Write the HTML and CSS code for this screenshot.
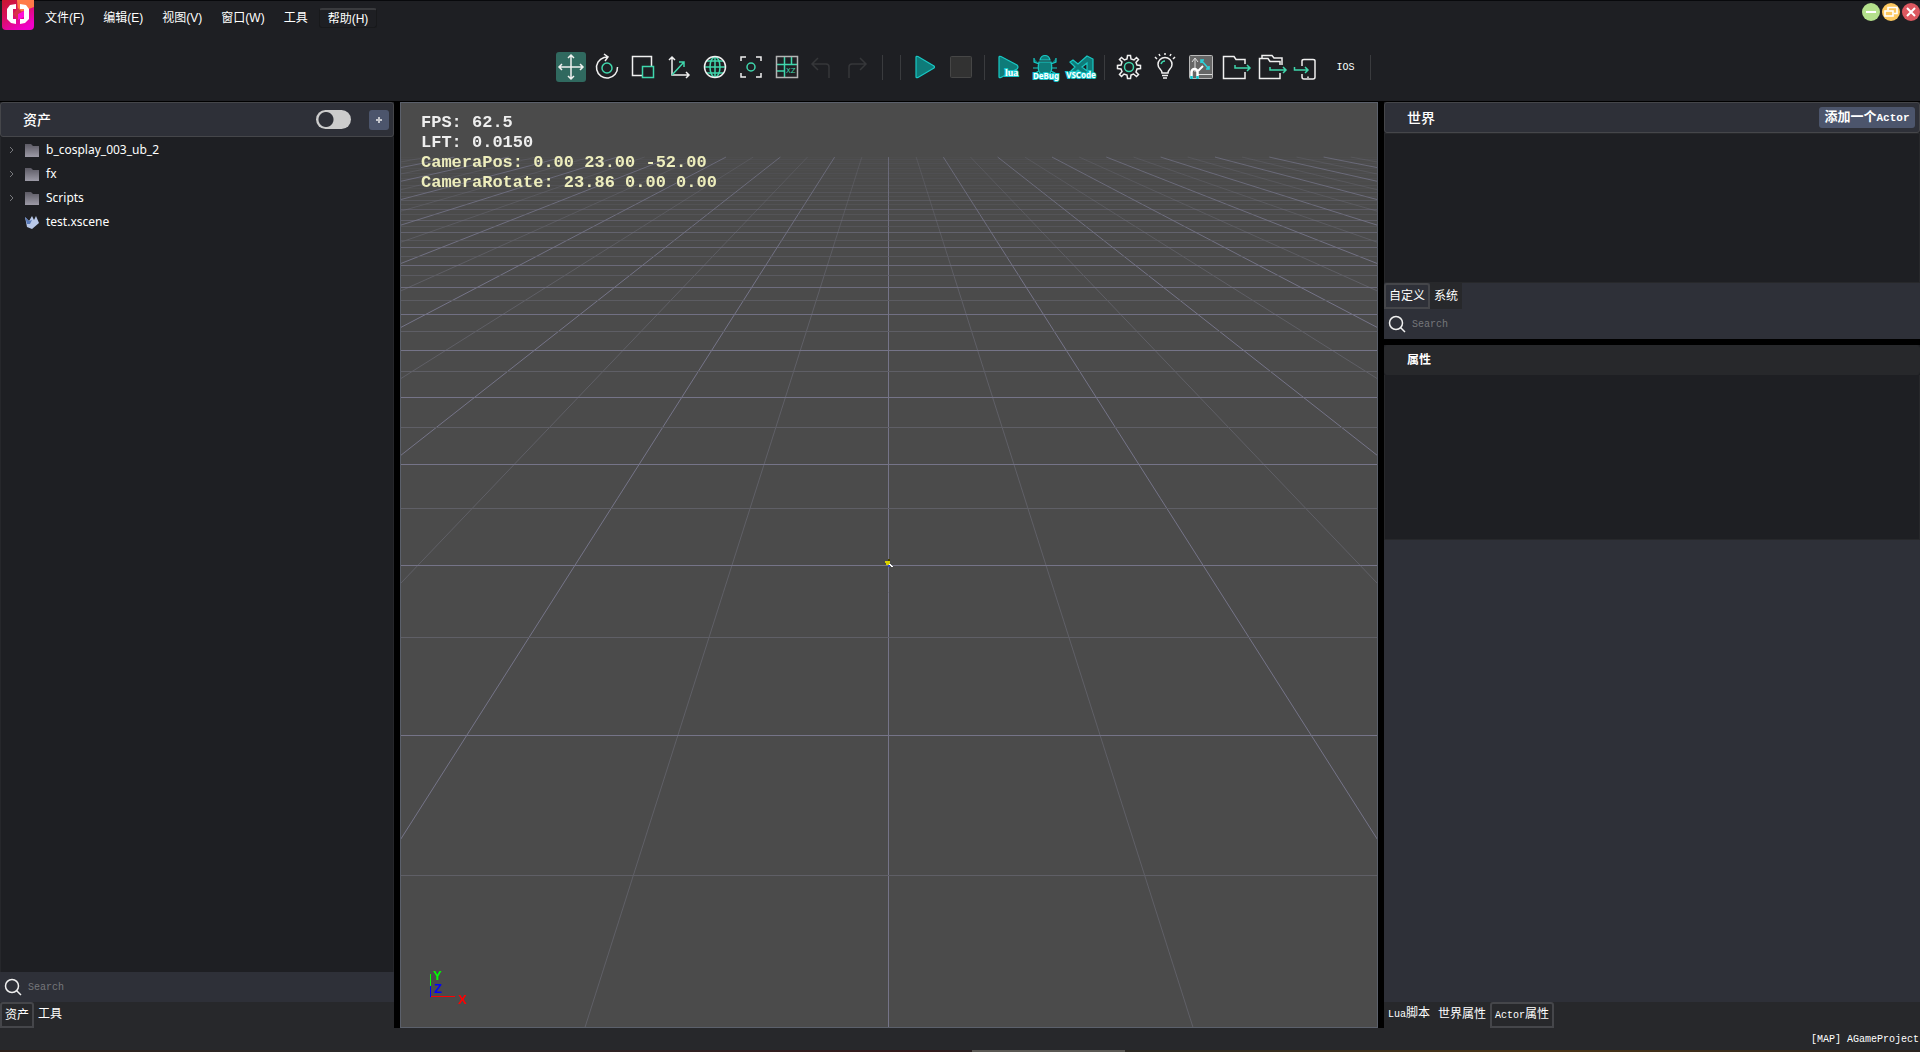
FILE: index.html
```html
<!DOCTYPE html>
<html lang="zh">
<head>
<meta charset="utf-8">
<title>AGameProject</title>
<link rel="stylesheet" href="styles.css">
</head>
<body>
<header class="top">
  <div class="titlebar">
    <svg class="logo" width="32" height="30" viewBox="0 0 32 30">
      <defs><linearGradient id="lg" x1="0" y1="0" x2="0.6" y2="1"><stop offset="0" stop-color="#c8182c"/><stop offset="0.45" stop-color="#d8105c"/><stop offset="1" stop-color="#f000c8"/></linearGradient></defs>
      <path d="M0 0H32V26Q32 30 28 30H4Q0 30 0 26Z" fill="url(#lg)"/>
      <path d="M15 0H32V7L16 13Z" fill="#ff7a48"/>
      <path d="M16 8L22 14L16 20L11 14Z" fill="#d8304a"/>
      <path d="M16 14L22 11V17L16 20Z" fill="#ff10d8"/>
      <path d="M14 4L8 5L5 9V19L9 23L14 24V19H11V9H14ZM18 4L24 5L27 9V19L23 23L18 24V19H22V9H18Z" fill="#fff"/>
    </svg>
    <nav class="menu">
      <button>文件(F)</button><button>编辑(E)</button><button>视图(V)</button><button>窗口(W)</button><button>工具</button><button class="hot">帮助(H)</button>
    </nav>
    <div class="winbtns">
      <button class="min" aria-label="最小化"><svg width="18" height="18" viewBox="0 0 18 18"><path d="M4 9H14" stroke="#fff" stroke-width="2"/></svg></button>
      <button class="restore" aria-label="还原"><svg width="18" height="18" viewBox="0 0 18 18" fill="none" stroke="#fff" stroke-width="1.6"><path d="M6 7V4.500H15V10.500H12"/><rect x="3" y="8" width="8" height="5"/></svg></button>
      <button class="close" aria-label="关闭"><svg width="18" height="18" viewBox="0 0 18 18"><path d="M5 5L13 13M13 5L5 13" stroke="#fff" stroke-width="2"/></svg></button>
    </div>
  </div>
  <div class="toolbar">
    <button class="on" aria-label="移动"><svg viewBox="0 0 30 30"><path class="w" d="M3 15H27M15 3V27M6 12L3 15L6 18M24 12L27 15L24 18M12 6L15 3L18 6M12 24L15 27L18 24"/></svg></button>
    <button aria-label="旋转"><svg viewBox="0 0 30 30"><path class="w" d="M25.500 15A10.500 10.500 0 1 1 12 5.500L16 5M12 2L16 5L13 9"/><circle class="g" cx="15" cy="16" r="5"/></svg></button>
    <button aria-label="缩放"><svg viewBox="0 0 30 30"><path class="w" d="M14 23.500H4.500V4.500H23.500V14"/><rect class="g" x="14.500" y="14.500" width="11" height="11"/></svg></button>
    <button aria-label="坐标"><svg viewBox="0 0 30 30"><path class="w" d="M8 5V23H25M5 8L8 5L11 8M22 20L25 23L22 26"/><path class="g" d="M8 23L20 10M15 10H20V15"/></svg></button>
    <button aria-label="世界"><svg viewBox="0 0 30 30"><g class="g"><ellipse cx="15" cy="15" rx="5" ry="10"/><path d="M15 5V25M5 15H25M7 9H23M7 21H23"/></g><circle class="w" cx="15" cy="15" r="10.500"/></svg></button>
    <button aria-label="聚焦"><svg viewBox="0 0 30 30"><path class="w" d="M5 9V5H10M20 5H25V9M25 21V25H20M10 25H5V21"/><circle class="g" cx="15" cy="15" r="4"/></svg></button>
    <button aria-label="XZ 网格"><svg viewBox="0 0 30 30"><path class="g" d="M5 12.500H25M12.500 5V25M5 19H12M19.500 5V12"/><rect class="w dim" x="4.500" y="4.500" width="21" height="21"/><text x="14" y="21" class="xz">XZ</text></svg></button>
    <button disabled aria-label="撤销"><svg viewBox="0 0 30 30"><path class="off" d="M10 6L4 12L10 18M4 12H18Q21 12 21 15V26"/></svg></button>
    <button disabled aria-label="重做"><svg viewBox="0 0 30 30"><path class="off" d="M16 6L22 12L16 18M22 12H8Q5 12 5 15V26"/></svg></button>
    <i></i><i></i>
    <button aria-label="运行"><svg viewBox="0 0 30 30"><path class="t" d="M6 5Q6 4 8 4.500L24 14Q25 15 24 16L8 25.500Q6 26 6 25Z"/></svg></button>
    <button aria-label="停止"><svg viewBox="0 0 30 30"><rect x="4.500" y="4.500" width="21" height="21" rx="1" fill="#323232" stroke="#464646"/></svg></button>
    <i></i>
    <button aria-label="Lua"><svg viewBox="0 0 30 30"><path class="t" d="M5 5Q5 4 7 4.500L23 13Q25 15 23 17L7 25.500Q5 26 5 25Z"/><text x="11" y="24" class="cap serif">lua</text></svg></button>
    <button aria-label="Debug"><svg viewBox="0 0 30 30"><path class="t" d="M10 8Q11 3.500 15 3.500T20 8ZM9 10H21Q24 22 15 24Q6 22 9 10ZM4 6V10L9 12M26 6V10L21 12M3 16H8M22 16H27M5 24V21L9 19M25 24V21L21 19"/><text x="16" y="27" class="cap" text-anchor="middle">DeBug</text></svg></button>
    <button aria-label="VSCode"><svg viewBox="0 0 30 30"><path class="t" fill-rule="evenodd" d="M21 4L27 7V23L21 26L12 18L7 22L4 20L9 15L4 10L7 8L12 12ZM21 11L16 15L21 19Z"/><text x="15" y="26" class="cap" text-anchor="middle">VSCode</text></svg></button>
    <i></i>
    <button aria-label="设置"><svg viewBox="0 0 30 30"><path class="w" d="M13 7L13.500 3.500H16.500L17 7L20 8L22.500 5.500L24.500 7.500L22 10.500L23 13L26.500 13.500V16.500L23 17L22 20L24.500 22.500L22.500 24.500L19.500 22L17 23L16.500 26.500H13.500L13 23L10 22L7.500 24.500L5.500 22.500L8 19.500L7 17L3.500 16.500V13.500L7 13L8 10L5.500 7.500L7.500 5.500L10.500 8Z"/><circle class="g" cx="15" cy="15" r="4.500"/></svg></button>
    <button aria-label="灯光"><svg viewBox="0 0 30 30"><path class="w" d="M12 21C12 17 8 17 8 12.500A7 7 0 0 1 22 12.500C22 17 18 17 18 21ZM12 23.500H18M13 26H17M15 1V3M9 2L10 4M21 2L20 4M5 5L7 7M25 5L23 7"/><path class="g" d="M11 12Q12 9 15 9"/></svg></button>
    <button aria-label="统计"><svg viewBox="0 0 30 30"><rect x="3.500" y="3.500" width="23" height="23" rx="1" fill="#666" stroke="#b8b8b8"/><path d="M9 20V7M6 10L9 6L12 10M12 22.500H26" fill="none" stroke="#ddd"/><path d="M12 19L17 14" stroke="#fff" stroke-width="2"/><path d="M15 8L23 17M15 11V8H18M20 17H23V14" fill="none" stroke="#2ad0d8" stroke-width="1.600"/><path d="M5.500 27V20A3 3 0 0 1 11.500 20V27" fill="none" stroke="#fff" stroke-width="2.500"/><path d="M5.500 27V24M11.500 27V24" stroke="#10c8d0" stroke-width="2.500"/></svg></button>
    <button aria-label="导出"><svg viewBox="0 0 30 30"><path class="w" d="M23 12V7.500H14L12 4.500H1.500V26.500H23V20"/><path class="g" d="M13 13V16H28M25 13L28 16L25 19"/></svg></button>
    <button aria-label="全部导出"><svg viewBox="0 0 30 30"><path class="w" d="M4 6V3.500H14L16 6H24V13M22 13V9.500H12L10 6.500H1.500V26.500H22V21"/><path class="g" d="M12 15V18H28M25 15L28 18L25 21"/></svg></button>
    <button aria-label="导入设备"><svg viewBox="2 0 30 30"><path class="w" d="M10 14V9Q10 7.500 12 7.500H21Q23 7.500 23 9V25Q23 27 21 27H12Q10 27 10 25V22M16 24.500V26"/><path class="g" d="M2.500 15V18H16M13 15L16 18L13 21"/></svg></button>
    <button class="ios">IOS</button>
    <i></i>
  </div>
</header>
<main>
  <section class="left">
    <div class="head"><h2>资产</h2><input type="checkbox" class="switch" aria-label="切换"><button class="plus" aria-label="添加"><svg width="20" height="20"><path d="M7 10H13M10 7V13" stroke="#c4c6cc" stroke-width="2"/></svg></button></div>
    <ul class="tree">
      <li><svg class="chev" viewBox="0 0 8 8"><path d="M3 1L6 4L3 7"/></svg><svg class="fold" viewBox="0 0 14 13"><path d="M0 0H6L8 2H14V13H0Z" fill="url(#fg)"/></svg>b_cosplay_003_ub_2</li>
      <li><svg class="chev" viewBox="0 0 8 8"><path d="M3 1L6 4L3 7"/></svg><svg class="fold" viewBox="0 0 14 13"><path d="M0 0H6L8 2H14V13H0Z" fill="url(#fg)"/></svg>fx</li>
      <li><svg class="chev" viewBox="0 0 8 8"><path d="M3 1L6 4L3 7"/></svg><svg class="fold" viewBox="0 0 14 13"><defs><linearGradient id="fg" x1="0" y1="0" x2="0" y2="1"><stop offset="0" stop-color="#5c5a64"/><stop offset="1" stop-color="#9c9aa6"/></linearGradient></defs><path d="M0 0H6L8 2H14V13H0Z" fill="url(#fg)"/></svg>Scripts</li>
      <li><span class="chev"></span><svg class="fold" viewBox="0 0 14 13"><path d="M0 1L4 5L7 0L9 4L11 0L14 7L7 13L2 11Z" fill="#b8c8e8"/><path d="M0 1L4 5L7 4L5 8L2 8Z" fill="#5a7ab8"/></svg>test.xscene</li>
    </ul>
    <label class="search"><svg width="18" height="18" viewBox="0 0 18 18"><circle cx="8" cy="8" r="6.500"/><path d="M12.500 12.500L17 17"/></svg><input type="text" placeholder="Search" aria-label="Search"></label>
    <div class="tabs"><button class="sel">资产</button><button>工具</button></div>
  </section>
  <section class="view">
    <canvas id="scene"></canvas>
    <div class="stats"><p>FPS: 62.5</p><p>LFT: 0.0150</p><p class="cam">CameraPos: 0.00 23.00 -52.00</p><p class="cam">CameraRotate: 23.86 0.00 0.00</p></div>
    <svg class="gizmo" width="44" height="40" viewBox="0 0 44 40"><path d="M2.500 6V18" stroke="#0f0"/><path d="M2.500 18V29" stroke="#00f"/><path d="M3 28.500H27" stroke="#f00"/><text x="5" y="12" fill="#0f0">Y</text><text x="6" y="25" fill="#00f">Z</text><text x="30" y="36" fill="#f00">X</text></svg>
  </section>
  <section class="right">
    <div class="head"><h2>世界</h2><button class="add">添加一个<span class="mono">Actor</span></button></div>
    <div class="world"></div>
    <div class="tabs panel"><button class="sel">自定义</button><button class="flat">系统</button></div>
    <label class="search"><svg width="18" height="18" viewBox="0 0 18 18"><circle cx="8" cy="8" r="6.500"/><path d="M12.500 12.500L17 17"/></svg><input type="text" placeholder="Search" aria-label="Search"></label>
    <div class="split"></div>
    <div class="head prop"><h2>属性</h2></div>
    <div class="props"></div>
    <div class="detail"></div>
    <div class="tabs"><button><span class="mono">Lua</span>脚本</button><button>世界属性</button><button class="sel"><span class="mono">Actor</span>属性</button></div>
  </section>
</main>
<footer class="mono">[MAP] AGameProject</footer>
<script src="scene.js"></script>
</body>
</html>
```
FILE: styles.css
```css
* { box-sizing: border-box; }
body { margin: 0; height: 100vh; display: flex; flex-direction: column; background: #000; color: #fff; font: 12px/16px "Liberation Sans", "Noto Sans CJK SC", sans-serif; overflow: hidden; }
button { background: none; border: 0; padding: 0; margin: 0; color: inherit; font: inherit; white-space: nowrap; }
h2, p, ul { margin: 0; padding: 0; }
svg { display: block; flex: none; }
.mono { font-family: "Liberation Mono", "Noto Sans CJK SC", monospace; font-size: 10px; }
.top { height: 101px; background: #1e1f23; border-top: 1px solid #08090c; flex: none; }
.titlebar { display: flex; height: 44px; align-items: flex-start; padding-left: 2px; }
.logo { margin-top: -1px; }
.menu { display: flex; gap: 3px; padding: 7px 0 0 3px; flex: 1; }
.menu button { height: 20px; padding: 0 8px; }
.menu .hot { border: 1px solid #18191b; border-top: 2px solid #3a3b3e; border-radius: 3px; line-height: 14px; }
.winbtns { display: flex; gap: 2px; padding-top: 2px; }
.winbtns button { width: 18px; height: 18px; border-radius: 50%; }
.min { background: #b4e08c; }
.restore { background: #fcc860; }
.close { background: #dc5860; }
.toolbar { display: flex; justify-content: center; align-items: center; height: 44px; gap: 6px; padding-left: 9px; }
.toolbar button { width: 30px; height: 30px; flex: none; }
.toolbar svg { width: 30px; height: 30px; overflow: visible; }
.toolbar i { width: 1px; height: 25px; background: #3a3b3e; margin: 0 3px 0 2px; }
.toolbar i + i { margin-left: 8px; }
.toolbar .ios { width: 32px; font: 10px "Liberation Mono", monospace; }
.toolbar .on { background: #30695f; border-radius: 3px; }
.w, .g, .off { fill: none; stroke-width: 1.5; stroke: #f0f0f0; }
.w.dim { stroke: #b4b4b4; }
.g, .g * { stroke: #3fd6ac; fill: none; }
.off { stroke: #36373a; }
.t { fill: #0e7b79; stroke: #18c8c4; stroke-width: 1.2; }
.xz { font: 7px "DejaVu Sans", sans-serif; fill: #3fd6ac; }
.cap { font: bold 8px "Noto Sans", sans-serif; fill: #fff; stroke: #14c8cc; stroke-width: 2px; paint-order: stroke; }
.cap.serif { font: bold 10px "Liberation Serif", serif; }
main { flex: 1; display: grid; grid-template-columns: 394px minmax(0, 1fr) 536px; column-gap: 6px; min-height: 0; padding-top: 1px; }
.left, .right { display: flex; flex-direction: column; min-height: 0; background: #1e1f23; }
.head { display: flex; align-items: center; height: 31px; background: #2e3038; border: 1px solid #45464a; border-radius: 3px; padding: 0 4px 0 22px; flex: none; }
.left .head { height: 35px; }
.head h2 { font-size: 14px; font-weight: 500; flex: 1; }
.prop.head { height: 30px; background: #27282b; border-color: #27282b; }
.prop h2 { font-size: 12px; font-weight: 700; }
.add { width: 96px; height: 21px; background: #4c556c; border-radius: 3px; font-size: 13px; font-weight: 700; }
.add .mono { font-size: 11px; }
.switch { appearance: none; margin: 0 18px 0 0; width: 35px; height: 19px; border-radius: 10px; background: radial-gradient(circle at 10px 50%, #2e3038 7px, #ccc 8px); }
.plus { width: 20px; height: 20px; background: #4c556c; border-radius: 3px; }
.tree { list-style: none; flex: 1; padding-top: 1px; border: 1px solid #26272b; border-width: 0 1px; font: 12px/24px "Noto Sans", sans-serif; }
.tree li { display: flex; align-items: center; height: 24px; }
.chev { width: 8px; height: 8px; margin: 0 10px 0 6px; fill: none; stroke: #77787c; flex: none; }
.fold { width: 14px; height: 13px; margin-right: 7px; }
.search { display: flex; align-items: center; height: 30px; background: #2e3038; padding-left: 4px; gap: 4px; flex: none; }
.search svg { fill: none; stroke: #f0f0f0; stroke-width: 1.5; }
.search input { flex: 1; min-width: 0; height: 20px; background: none; border: 0; outline: 0; color: #fff; font: 10px "Liberation Mono", monospace; }
.search input::placeholder { color: #76777b; opacity: 1; }
.tabs { display: flex; height: 26px; background: #27282b; flex: none; }
.tabs button { height: 24px; padding: 0 4px; }
.tabs .sel { height: 26px; border: 2px solid #45464a; border-radius: 3px 3px 0 0; padding: 0 3px; }
.tabs.panel { background: #2e3038; }
.panel .flat { height: 26px; background: #27282b; }
.view { position: relative; border: 1px solid #5b606b; min-width: 0; background: #4b4b4b; }
#scene { display: block; width: 100%; height: 100%; position: absolute; inset: 0; }
.stats { position: absolute; left: 20px; top: 10px; font: bold 17px/20px "Liberation Mono", monospace; color: #eee; white-space: pre; }
.cam { color: #ededbc; }
.gizmo { position: absolute; left: 27px; bottom: 19px; font: bold 13px "Liberation Sans", sans-serif; }
.world { flex: 0 0 150px; border: 1px solid #27282b; }
.split { height: 6px; background: #000; flex: none; }
.props { flex: 0 0 165px; border: 1px solid #27282b; border-top: 0; }
.detail { flex: 1; background: #2e3038; }
footer { height: 24px; background: linear-gradient(90deg, #2c201a, #2b2a2b 20%, #33191a 48%, #2a2020 50.6%, #5a5853 50.6%, #5a5853 58.6%, #2a2822 58.6%, #4a3414 80%, #2a2420) bottom / 100% 2px no-repeat #27282b; text-align: right; padding-right: 1px; line-height: 24px; flex: none; }
```
FILE: scene.js
```js
// Ground grid seen by the editor camera: 45° field of view, looking at the origin.
const canvas = document.getElementById('scene');
const camera = { y: 23, z: -52 };
const STEP = 8, FAR = 297, NEAR = -44;

function draw() {
  const w = canvas.width = canvas.clientWidth;
  const h = canvas.height = canvas.clientHeight;
  const ctx = canvas.getContext('2d');
  const dist = Math.hypot(camera.y, camera.z);
  const sin = camera.y / dist, cos = -camera.z / dist;
  const focal = h / 2 / Math.tan(Math.PI / 8);
  const project = (x, z) => {
    const dz = z - camera.z;
    const depth = camera.y * sin + dz * cos;
    const up = dz * sin - camera.y * cos;
    return [w / 2 + focal * x / depth, h / 2 - focal * up / depth];
  };
  const color = (i) => i % 2 ? '#5f5f66' : '#757488';
  ctx.lineWidth = 1;

  for (let i = -40; i <= 40; i++) {
    const [x1, y1] = project(i * STEP, NEAR);
    const [x2, y2] = project(i * STEP, FAR);
    const fade = ctx.createLinearGradient(0, y2, 0, y2 + 130);
    fade.addColorStop(0, i % 2 ? '#56565a' : '#686876');
    fade.addColorStop(1, color(i));
    ctx.strokeStyle = fade;
    ctx.beginPath();
    ctx.moveTo(i ? x1 : Math.floor(x1) - 0.5, y1);
    ctx.lineTo(i ? x2 : Math.floor(x2) - 0.5, y2);
    ctx.stroke();
  }
  for (let i = -5; i * STEP <= FAR; i++) {
    const y = Math.floor(project(0, i * STEP)[1]) + 0.5;
    ctx.globalAlpha = i > 6 ? Math.max(0.12, 1 - (i - 6) / 24) : 1;
    ctx.strokeStyle = color(i);
    ctx.beginPath();
    ctx.moveTo(0, y);
    ctx.lineTo(w, y);
    ctx.stroke();
  }
  ctx.globalAlpha = 1;
  const cx = Math.floor(w / 2) - 1, cy = Math.floor(h / 2);
  ctx.fillStyle = '#d8d000';
  ctx.fillRect(cx - 3, cy - 4, 5, 2);
  ctx.fillRect(cx - 2, cy - 2, 4, 2);
  ctx.fillStyle = '#444000';
  ctx.fillRect(cx, cy - 6, 2, 2);
  ctx.fillStyle = '#3048c0';
  ctx.fillRect(cx, cy, 2, 2);
  ctx.fillStyle = '#fff';
  ctx.fillRect(cx + 1, cy - 1, 2, 1);
  ctx.fillRect(cx + 2, cy, 2, 1);
  ctx.fillRect(cx + 3, cy + 1, 2, 1);
}
draw();
addEventListener('resize', draw);
```
